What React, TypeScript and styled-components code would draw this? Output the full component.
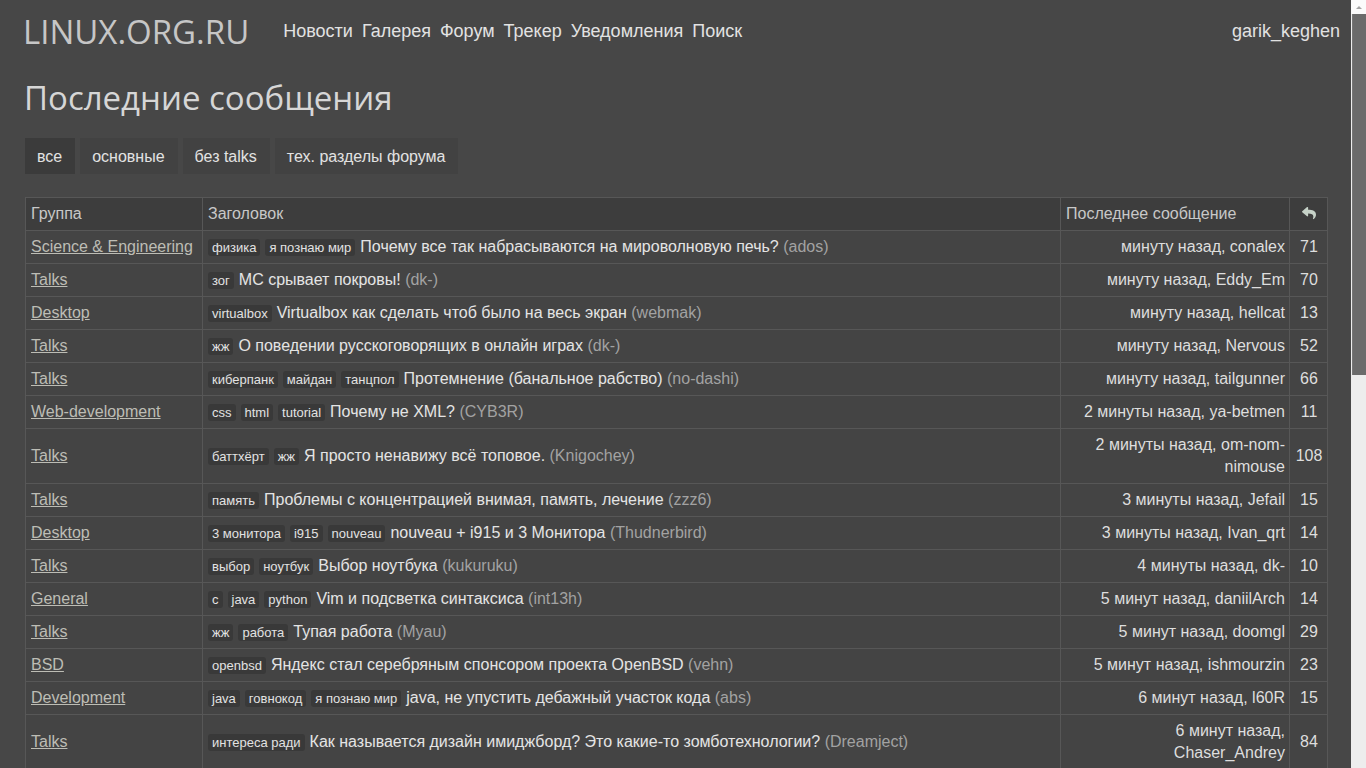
import React from "react";
import styled, { createGlobalStyle } from "styled-components";
import { FaReply } from "react-icons/fa";

const GlobalStyle = createGlobalStyle`
  html, body { margin: 0; padding: 0; }
  body {
    background: #474747;
    color: #dedede;
    font-family: "Liberation Sans", Arial, sans-serif;
  }
`;

const Page = styled.div`
  min-height: 1600px;
  margin-right: 15px;
`;

/* window scrollbar as in the reference, lying over the page edge */
const ScrollTrack = styled.div`
  position: fixed;
  top: 0;
  right: 0;
  bottom: 0;
  width: 15px;
  background: #ededed;
  display: flex;
  flex-direction: column;
  z-index: 10;
`;

const ScrollButton = styled.div`
  height: 14px;
  background: #fbfbfb;
  display: flex;
  align-items: center;
  justify-content: center;
  &::after {
    content: "";
    border-left: 3px solid transparent;
    border-right: 3px solid transparent;
    border-bottom: 3px solid #a3a3a3;
  }
`;

const ScrollThumb = styled.div`
  height: 361px;
  margin-left: 1px;
  background: #6b6b6b;
  border-left: 1px solid #777;
`;

const Header = styled.header`
  display: flex;
  align-items: center;
  height: 62px;
  padding: 0 11px 0 23px;
`;

const Logo = styled.a`
  font-family: "Open Sans", "Liberation Sans", sans-serif;
  font-size: 33px;
  color: #c6c6c6;
  text-decoration: none;
  margin-right: 34px;
  margin-top: 1px;
`;

const Nav = styled.nav`
  display: flex;
  gap: 9px;
  font-size: 18px;
`;

const NavLink = styled.a`
  color: #e2e2e2;
  text-decoration: none;
`;

const User = styled.a`
  margin-left: auto;
  font-size: 18px;
  color: #e2e2e2;
  text-decoration: none;
`;

const Main = styled.main`
  padding: 0 23px 0 25px;
`;

const Title = styled.h1`
  font-family: "Open Sans", "Liberation Sans", sans-serif;
  font-weight: 400;
  font-size: 33px;
  color: #d6d6d6;
  margin: 12px 0 0 -1px;
  line-height: 48px;
`;

const Tabs = styled.div`
  display: flex;
  gap: 5px;
  margin-top: 16px;
`;

const Tab = styled.a<{ $active?: boolean }>`
  display: block;
  height: 36px;
  line-height: 37px;
  padding: 0 13px 0 12px;
  font-size: 16px;
  color: #e2e2e2;
  text-decoration: none;
  background: ${(p) => (p.$active ? "#3b3b3b" : "#424242")};
`;

const Table = styled.table`
  margin-top: 23px;
  width: 100%;
  border-collapse: collapse;
  table-layout: fixed;
  border: 1px solid #575757;
  font-size: 16px;
  line-height: 22px;
`;

const HeadCell = styled.th<{ $center?: boolean }>`
  background: #3d3d3d;
  color: #c8c8c8;
  font-weight: 400;
  text-align: ${(p) => (p.$center ? "center" : "left")};
  padding: 5px 5px;
  border: 1px solid #575757;
`;

const Cell = styled.td<{ $align?: "left" | "right" | "center" }>`
  background: #444444;
  text-align: ${(p) => p.$align || "left"};
  vertical-align: middle;
  padding: 5px 4px 5px 5px;
  border: 1px solid #575757;
  color: #dedede;
`;

const GroupLink = styled.a`
  color: #bdbdb5;
  text-decoration: underline;
`;

const Tag = styled.span`
  display: inline-block;
  font-size: 13px;
  line-height: 17px;
  padding: 0 4px;
  margin-right: 5px;
  border-radius: 3px;
  background: #393939;
  color: #e2e2e2;
`;

const TopicLink = styled.a`
  color: #e4e4e4;
  text-decoration: none;
`;

const Author = styled.span`
  color: #a2a2a2;
`;

const ReplyIcon = styled(FaReply)`
  color: #c6d2c8;
  width: 14px;
  height: 14px;
  vertical-align: -1px;
`;

type Row = {
  group: string;
  tags: string[];
  title: string;
  author: string;
  last: string;
  count: number;
};

const rows: Row[] = [
  { group: "Science & Engineering", tags: ["физика", "я познаю мир"], title: "Почему все так набрасываются на мироволновую печь?", author: "ados", last: "минуту назад, conalex", count: 71 },
  { group: "Talks", tags: ["зог"], title: "МС срывает покровы!", author: "dk-", last: "минуту назад, Eddy_Em", count: 70 },
  { group: "Desktop", tags: ["virtualbox"], title: "Virtualbox как сделать чтоб было на весь экран", author: "webmak", last: "минуту назад, hellcat", count: 13 },
  { group: "Talks", tags: ["жж"], title: "О поведении русскоговорящих в онлайн играх", author: "dk-", last: "минуту назад, Nervous", count: 52 },
  { group: "Talks", tags: ["киберпанк", "майдан", "танцпол"], title: "Протемнение (банальное рабство)", author: "no-dashi", last: "минуту назад, tailgunner", count: 66 },
  { group: "Web-development", tags: ["css", "html", "tutorial"], title: "Почему не XML?", author: "CYB3R", last: "2 минуты назад, ya-betmen", count: 11 },
  { group: "Talks", tags: ["баттхёрт", "жж"], title: "Я просто ненавижу всё топовое.", author: "Knigochey", last: "2 минуты назад, om-nom-nimouse", count: 108 },
  { group: "Talks", tags: ["память"], title: "Проблемы с концентрацией внимая, память, лечение", author: "zzz6", last: "3 минуты назад, Jefail", count: 15 },
  { group: "Desktop", tags: ["3 монитора", "i915", "nouveau"], title: "nouveau + i915 и 3 Монитора", author: "Thudnerbird", last: "3 минуты назад, Ivan_qrt", count: 14 },
  { group: "Talks", tags: ["выбор", "ноутбук"], title: "Выбор ноутбука", author: "kukuruku", last: "4 минуты назад, dk-", count: 10 },
  { group: "General", tags: ["c", "java", "python"], title: "Vim и подсветка синтаксиса", author: "int13h", last: "5 минут назад, daniilArch", count: 14 },
  { group: "Talks", tags: ["жж", "работа"], title: "Тупая работа", author: "Myau", last: "5 минут назад, doomgl", count: 29 },
  { group: "BSD", tags: ["openbsd"], title: "Яндекс стал серебряным спонсором проекта OpenBSD", author: "vehn", last: "5 минут назад, ishmourzin", count: 23 },
  { group: "Development", tags: ["java", "говнокод", "я познаю мир"], title: "java, не упустить дебажный участок кода", author: "abs", last: "6 минут назад, l60R", count: 15 },
  { group: "Talks", tags: ["интереса ради"], title: "Как называется дизайн имиджборд? Это какие-то зомботехнологии?", author: "Dreamject", last: "6 минут назад, Chaser_Andrey", count: 84 },
];

export default function App() {
  return (
    <Page>
      <GlobalStyle />
      <ScrollTrack>
        <ScrollButton />
        <ScrollThumb />
      </ScrollTrack>
      <Header>
        <Logo href="#">LINUX.ORG.RU</Logo>
        <Nav>
          {["Новости", "Галерея", "Форум", "Трекер", "Уведомления", "Поиск"].map((n) => (
            <NavLink key={n} href="#">{n}</NavLink>
          ))}
        </Nav>
        <User href="#">garik_keghen</User>
      </Header>
      <Main>
        <Title>Последние сообщения</Title>
        <Tabs>
          <Tab $active href="#">все</Tab>
          <Tab href="#">основные</Tab>
          <Tab href="#">без talks</Tab>
          <Tab href="#">тех. разделы форума</Tab>
        </Tabs>
        <Table>
          <colgroup>
            <col style={{ width: 177 }} />
            <col />
            <col style={{ width: 229 }} />
            <col style={{ width: 38 }} />
          </colgroup>
          <thead>
            <tr>
              <HeadCell>Группа</HeadCell>
              <HeadCell>Заголовок</HeadCell>
              <HeadCell>Последнее сообщение</HeadCell>
              <HeadCell $center><ReplyIcon /></HeadCell>
            </tr>
          </thead>
          <tbody>
            {rows.map((r, i) => (
              <tr key={i}>
                <Cell><GroupLink href="#">{r.group}</GroupLink></Cell>
                <Cell>
                  {r.tags.map((t) => (
                    <Tag key={t}>{t}</Tag>
                  ))}
                  <TopicLink href="#">{r.title}</TopicLink> <Author>({r.author})</Author>
                </Cell>
                <Cell $align="right">{r.last}</Cell>
                <Cell $align="center">{r.count}</Cell>
              </tr>
            ))}
          </tbody>
        </Table>
      </Main>
    </Page>
  );
}
